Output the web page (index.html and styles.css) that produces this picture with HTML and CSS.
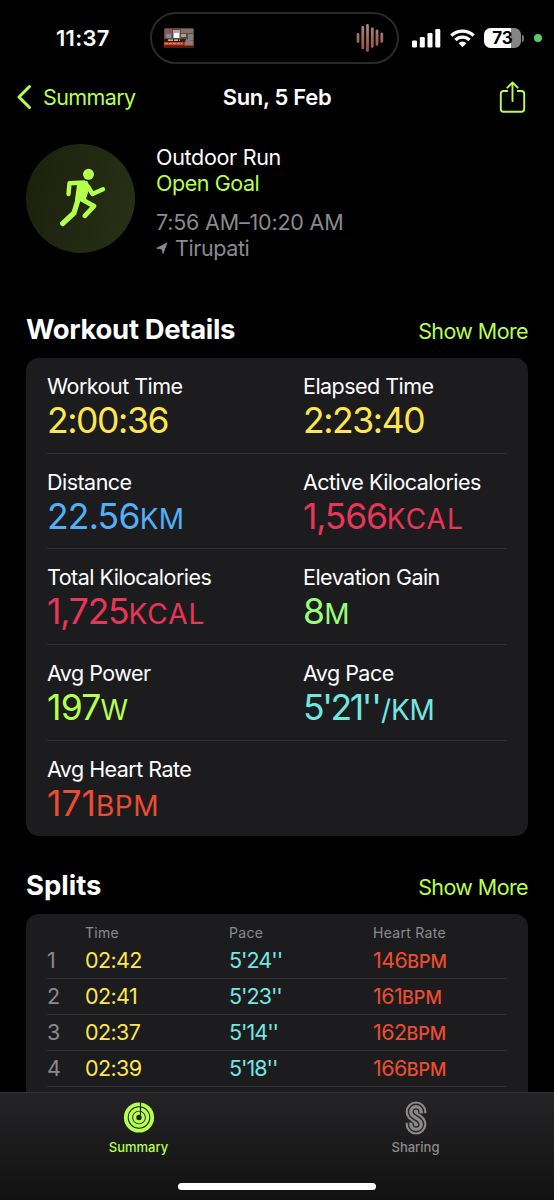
FILE: index.html
```html
<!DOCTYPE html>
<html lang="en">
<head>
  <meta charset="utf-8">
  <title>Outdoor Run</title>
  <link rel="stylesheet" href="styles.css">
</head>
<body>
  <div class="screen">
    <div class="status">
      <span class="clock">11:37</span>
      <div class="island">
        <svg class="thumb" width="30" height="20" viewBox="0 0 30 20">
          <rect width="30" height="20" rx="1.5" fill="#5d4742"/>
          <rect x="1" y="1" width="7" height="9" fill="#8b5560"/>
          <rect x="2" y="6" width="5" height="4" fill="#7192a4"/>
          <rect x="9" y="2" width="7" height="8" fill="#b9a598"/>
          <rect x="10" y="5" width="5" height="5" fill="#fff"/>
          <rect x="17" y="1" width="12" height="4" fill="#827168"/>
          <rect x="17" y="6" width="5" height="3" fill="#a4a09c"/>
          <rect x="24" y="6" width="5" height="6" fill="#75828a"/>
          <rect y="11" width="22" height="3" fill="#42120c"/>
          <path d="M4 12.2h12" stroke="#e9dcd6" stroke-width="1.2" stroke-dasharray="5 1 4 1"/>
          <rect y="14" width="19" height="3.5" fill="#b8452a"/>
          <path d="M1 15.5h17" stroke="#dd9058" stroke-dasharray="3 1"/>
          <path d="M22 11l7 2v5h-9z" fill="#96786f"/>
          <rect y="17.5" width="30" height="2.5" rx="1" fill="#64140f"/>
        </svg>
        <svg class="wave" width="28" height="30" viewBox="0 0 28 30">
          <defs>
            <linearGradient id="wave" x1="0" y1="0" x2="0" y2="30" gradientUnits="userSpaceOnUse">
              <stop offset="0" stop-color="#a08c86"/>
              <stop offset="1" stop-color="#a24a38"/>
            </linearGradient>
          </defs>
          <g stroke="url(#wave)" stroke-width="2.8" stroke-linecap="round">
            <path d="M2 11.5L2.01 18.5M6.8 4.5L6.81 25M11.5 2.5L11.51 27.5M16.3 6L16.31 23.5M21 8L21.01 21.5M25.8 11L25.81 18.5"/>
          </g>
        </svg>
      </div>
      <svg class="signal" width="29" height="19" viewBox="0 0 29 19" fill="#fff">
        <rect x="0" y="11.5" width="5" height="7" rx="1.3"/>
        <rect x="7.8" y="8" width="5" height="10.5" rx="1.3"/>
        <rect x="15.5" y="4" width="5" height="14.5" rx="1.3"/>
        <rect x="23.3" y="0" width="5" height="18.5" rx="1.3"/>
      </svg>
      <svg class="wifi" width="25" height="19" viewBox="0 0 25 19" fill="none" stroke="#fff" stroke-width="3.3">
        <path d="M1.3 6.6a16 16 0 0 1 22.4 0"/>
        <path d="M5.4 11a10.2 10.2 0 0 1 14.2 0"/>
        <path d="M12.5 18.2l-3.9-4a5.6 5.6 0 0 1 7.8 0z" fill="#fff" stroke="none"/>
      </svg>
      <div class="battery">73</div>
      <div class="battery-cap"></div>
      <div class="camera-dot"></div>
    </div>

    <div class="nav">
      <a class="back">
        <svg width="15" height="26" viewBox="0 0 15 26" fill="none" stroke="#b5ff4e" stroke-width="3" stroke-linecap="round" stroke-linejoin="round"><path d="M12.5 2.5L2 13l10.5 10.5"/></svg>
        <span>Summary</span>
      </a>
      <span class="title">Sun, 5 Feb</span>
      <svg class="share" width="27" height="33" viewBox="0 0 27 33" fill="none" stroke="#b5ff4e" stroke-width="1.9" stroke-linecap="round" stroke-linejoin="round">
        <path d="M8.3 10H4.5A2.7 2.7 0 0 0 1.8 12.7v15.3a2.7 2.7 0 0 0 2.7 2.7h18a2.7 2.7 0 0 0 2.7-2.7V12.7a2.7 2.7 0 0 0-2.7-2.7h-3.8"/>
        <path d="M13.5 20V1.700M8.300 6.700l5.200-5.200 5.200 5.200"/>
      </svg>
    </div>

    <div class="workout">
      <div class="badge">
        <svg width="109" height="109" viewBox="0 0 109 109" fill="none" stroke="#b5ff4e" stroke-linecap="round" stroke-linejoin="round">
          <circle cx="62.5" cy="30.3" r="5.5" fill="#b5ff4e" stroke="none"/>
          <path d="M42.5 50l1-10.8L58 38.5l4 4 4.500 7.500 10.500-4.700" stroke-width="4.400"/>
          <path d="M52.500 39l8-.800 2 5-4.200 13.300-8-1.500z" fill="#b5ff4e" stroke-width="2.400"/>
          <path d="M52.500 54l-4.500 15L36.700 79.500" stroke-width="5.200"/>
          <path d="M56 55.500l12 6.700-9.200 9.600" stroke-width="4.800"/>
        </svg>
      </div>
      <div class="about">
        <div class="kind">Outdoor Run</div>
        <div class="goal">Open Goal</div>
        <div class="when">7:56 AM–10:20 AM</div>
        <div class="where">
          <svg width="12" height="12" viewBox="0 0 12 12"><path d="M11 1L7 11.500 5.800 7 .700 6.200z" fill="#8a8a8f" stroke="#8a8a8f" stroke-width=".8" stroke-linejoin="round"/></svg>
          <span>Tirupati</span>
        </div>
      </div>
    </div>

    <div class="heading heading-details">
      <h2>Workout Details</h2>
      <a>Show More</a>
    </div>
    <div class="card details">
      <div class="row">
        <div><div class="label">Workout Time</div><div class="value yellow time">2:00:36</div></div>
        <div><div class="label">Elapsed Time</div><div class="value yellow time">2:23:40</div></div>
      </div>
      <div class="row">
        <div><div class="label">Distance</div><div class="value blue">22.56<small>KM</small></div></div>
        <div><div class="label">Active Kilocalories</div><div class="value red kcal">1,566<small>KCAL</small></div></div>
      </div>
      <div class="row">
        <div><div class="label">Total Kilocalories</div><div class="value red kcal">1,725<small>KCAL</small></div></div>
        <div><div class="label">Elevation Gain</div><div class="value green">8<small>M</small></div></div>
      </div>
      <div class="row">
        <div><div class="label">Avg Power</div><div class="value lime">197<small>W</small></div></div>
        <div><div class="label">Avg Pace</div><div class="value cyan pace">5'21<i>''</i><small>/KM</small></div></div>
      </div>
      <div class="row">
        <div><div class="label">Avg Heart Rate</div><div class="value orange bpm">171<small>BPM</small></div></div>
      </div>
    </div>

    <div class="heading heading-splits">
      <h2>Splits</h2>
      <a>Show More</a>
    </div>
    <div class="card splits">
      <div class="split split-head"><span></span><span>Time</span><span>Pace</span><span>Heart Rate</span></div>
      <div class="split"><span class="num">1</span><span class="yellow">02:42</span><span class="cyan split-pace">5'24''</span><span class="orange">146<small>BPM</small></span></div>
      <div class="split"><span class="num">2</span><span class="yellow">02:41</span><span class="cyan split-pace">5'23''</span><span class="orange">161<small>BPM</small></span></div>
      <div class="split"><span class="num">3</span><span class="yellow">02:37</span><span class="cyan split-pace">5'14''</span><span class="orange">162<small>BPM</small></span></div>
      <div class="split"><span class="num">4</span><span class="yellow">02:39</span><span class="cyan split-pace">5'18''</span><span class="orange">166<small>BPM</small></span></div>
    </div>

    <div class="tabbar">
      <div class="tab active">
        <svg width="32" height="34" viewBox="0 0 32 34" fill="none" stroke="#b5ff4e">
          <circle cx="16" cy="16.5" r="13.2" stroke-width="3.8"/>
          <circle cx="16" cy="16.5" r="8.6" stroke-width="3.5"/>
          <circle cx="16" cy="16.5" r="4.3" stroke-width="3.2"/>
          <path d="M17.5 1v13" stroke="#23251e" stroke-width="1.2"/>
        </svg>
        <span>Summary</span>
      </div>
      <div class="tab">
        <svg width="22" height="34" viewBox="0 0 22 34" fill="none">
          <defs>
            <path id="s" d="M16.2 12.3v-1.500a5.200 5.200 0 0 0-10.400 0c0 3 2 4.600 5.200 6.200s5.200 3.200 5.200 6.200a5.200 5.200 0 0 1-10.400 0v-1.500"/>
          </defs>
          <use href="#s" stroke="#8a8888" stroke-width="10.400"/>
          <use href="#s" stroke="#262424" stroke-width="6"/>
          <use href="#s" stroke="#8a8888" stroke-width="3.400"/>
        </svg>
        <span>Sharing</span>
      </div>
      <div class="home"></div>
    </div>
  </div>
</body>
</html>
```
FILE: styles.css
```css
* { box-sizing: border-box; }
body { margin: 0; background: #000; color: #fff; font-family: Inter, "Liberation Sans", sans-serif; font-size: 21.5px; }
.screen { position: relative; width: 554px; height: 1200px; overflow: hidden; background: #000; }
svg { display: block; flex: none; }
a { color: #b5ff4e; letter-spacing: -0.6px; }

.status { display: flex; align-items: center; height: 76px; padding-left: 56px; }
.clock { width: 94px; font-size: 22px; font-weight: 600; letter-spacing: 0.3px; }
.island { display: flex; align-items: center; justify-content: space-between; width: 249px; height: 52px; padding: 0 13px 0 12px; border: 2px solid #29292b; border-radius: 26px; }
.signal { margin-left: 13px; }
.wifi { margin-left: 9px; }
.battery { width: 37px; height: 20px; margin-left: 9px; border-radius: 6.5px; background: linear-gradient(90deg, #fff 73%, #858585 73%); color: #000; font-size: 17px; font-weight: 700; line-height: 20px; text-align: center; }
.battery-cap { width: 2px; height: 7px; margin-left: 1px; border-radius: 0 2px 2px 0; background: #777; }
.camera-dot { width: 8px; height: 8px; margin-left: 10px; border-radius: 50%; background: #55cf60; }

.nav { display: grid; grid-template-columns: 1fr auto 1fr; align-items: center; height: 42px; padding: 0 28px 0 17px; }
.back { display: flex; align-items: center; gap: 11px; }
.title { font-size: 22px; font-weight: 600; padding-left: 11px; letter-spacing: -0.3px; }
.share { justify-self: end; }

.workout { display: flex; gap: 21px; padding: 26px 26px 0; height: 182px; }
.badge { width: 109px; height: 109px; border-radius: 50%; background: linear-gradient(100deg, #1b200b, #283016); }
.about { line-height: 26px; color: #8a8a8f; letter-spacing: -0.3px; }
.kind { color: #fff; }
.goal { color: #b5ff4e; letter-spacing: -0.45px; }
.when { margin-top: 13px; letter-spacing: -0.2px; }
.where { display: flex; align-items: center; gap: 7px; letter-spacing: -0.4px; }

.heading { display: flex; align-items: baseline; justify-content: space-between; height: 58px; padding: 12px 26px 0; }
.heading h2 { margin: 0; font-size: 27.5px; line-height: 35px; font-weight: 700; letter-spacing: -0.35px; }
.heading-splits { margin-top: 20px; }
.heading-splits h2 { letter-spacing: 0; }

.card { margin: 0 26px; padding: 0 21px; border-radius: 13px; background: #1c1c1e; }
.details { height: 478px; }
.row { display: grid; grid-template-columns: 256px 1fr; height: 95.7px; padding-top: 15px; border-bottom: 1px solid #303032; }
.row:last-child { border-bottom: 0; }
.label { line-height: 26px; letter-spacing: -0.53px; }
.value { font-size: 35.5px; line-height: 43px; letter-spacing: -0.8px; }
.value small { font-size: 28px; letter-spacing: 0.2px; }
.value i { font-style: normal; letter-spacing: -1px; }
.value.time { letter-spacing: -1.4px; }
.value.kcal { letter-spacing: -1.2px; }
.value.kcal small { letter-spacing: 1px; }
.value.pace { letter-spacing: -2.4px; }
.value.pace small { letter-spacing: -0.2px; }
.value.bpm { letter-spacing: 0; }
.value.bpm small { letter-spacing: 0.5px; }

.splits { height: 300px; padding-top: 11px; }
.split { display: grid; grid-template-columns: 38px 144px 144px 1fr; height: 36px; line-height: 34px; letter-spacing: -0.6px; border-bottom: 1px solid #303032; }
.split small { font-size: 18px; letter-spacing: 0; font-weight: 500; }
.split .split-pace { letter-spacing: -1px; }
.split-head { height: 18px; border-bottom: 0; color: #8a8a8f; font-size: 14px; line-height: 16px; letter-spacing: 0.3px; }
.num { color: #8a8a8f; }

.yellow { color: #fee650; }
.blue { color: #51b0f8; }
.red { color: #e73657; }
.green { color: #98ff78; }
.lime { color: #b5ff4e; }
.cyan { color: #74e6e0; }
.orange { color: #ed4c33; }

/* sits over the scrolled content */
.tabbar { position: absolute; left: 0; right: 0; bottom: 0; display: grid; grid-template-columns: 1fr 1fr; height: 108px; padding-top: 8px; border-top: 1px solid #303033; background: linear-gradient(#242426, #161617 75%, #121213); }
.tab { display: flex; flex-direction: column; align-items: center; gap: 3px; color: #8c8a8a; font-size: 13px; font-weight: 500; line-height: 18px; }
.tab.active { color: #b5ff4e; }
.home { position: absolute; left: 178px; bottom: 10px; width: 198px; height: 7px; border-radius: 4px; background: #fff; }
```
